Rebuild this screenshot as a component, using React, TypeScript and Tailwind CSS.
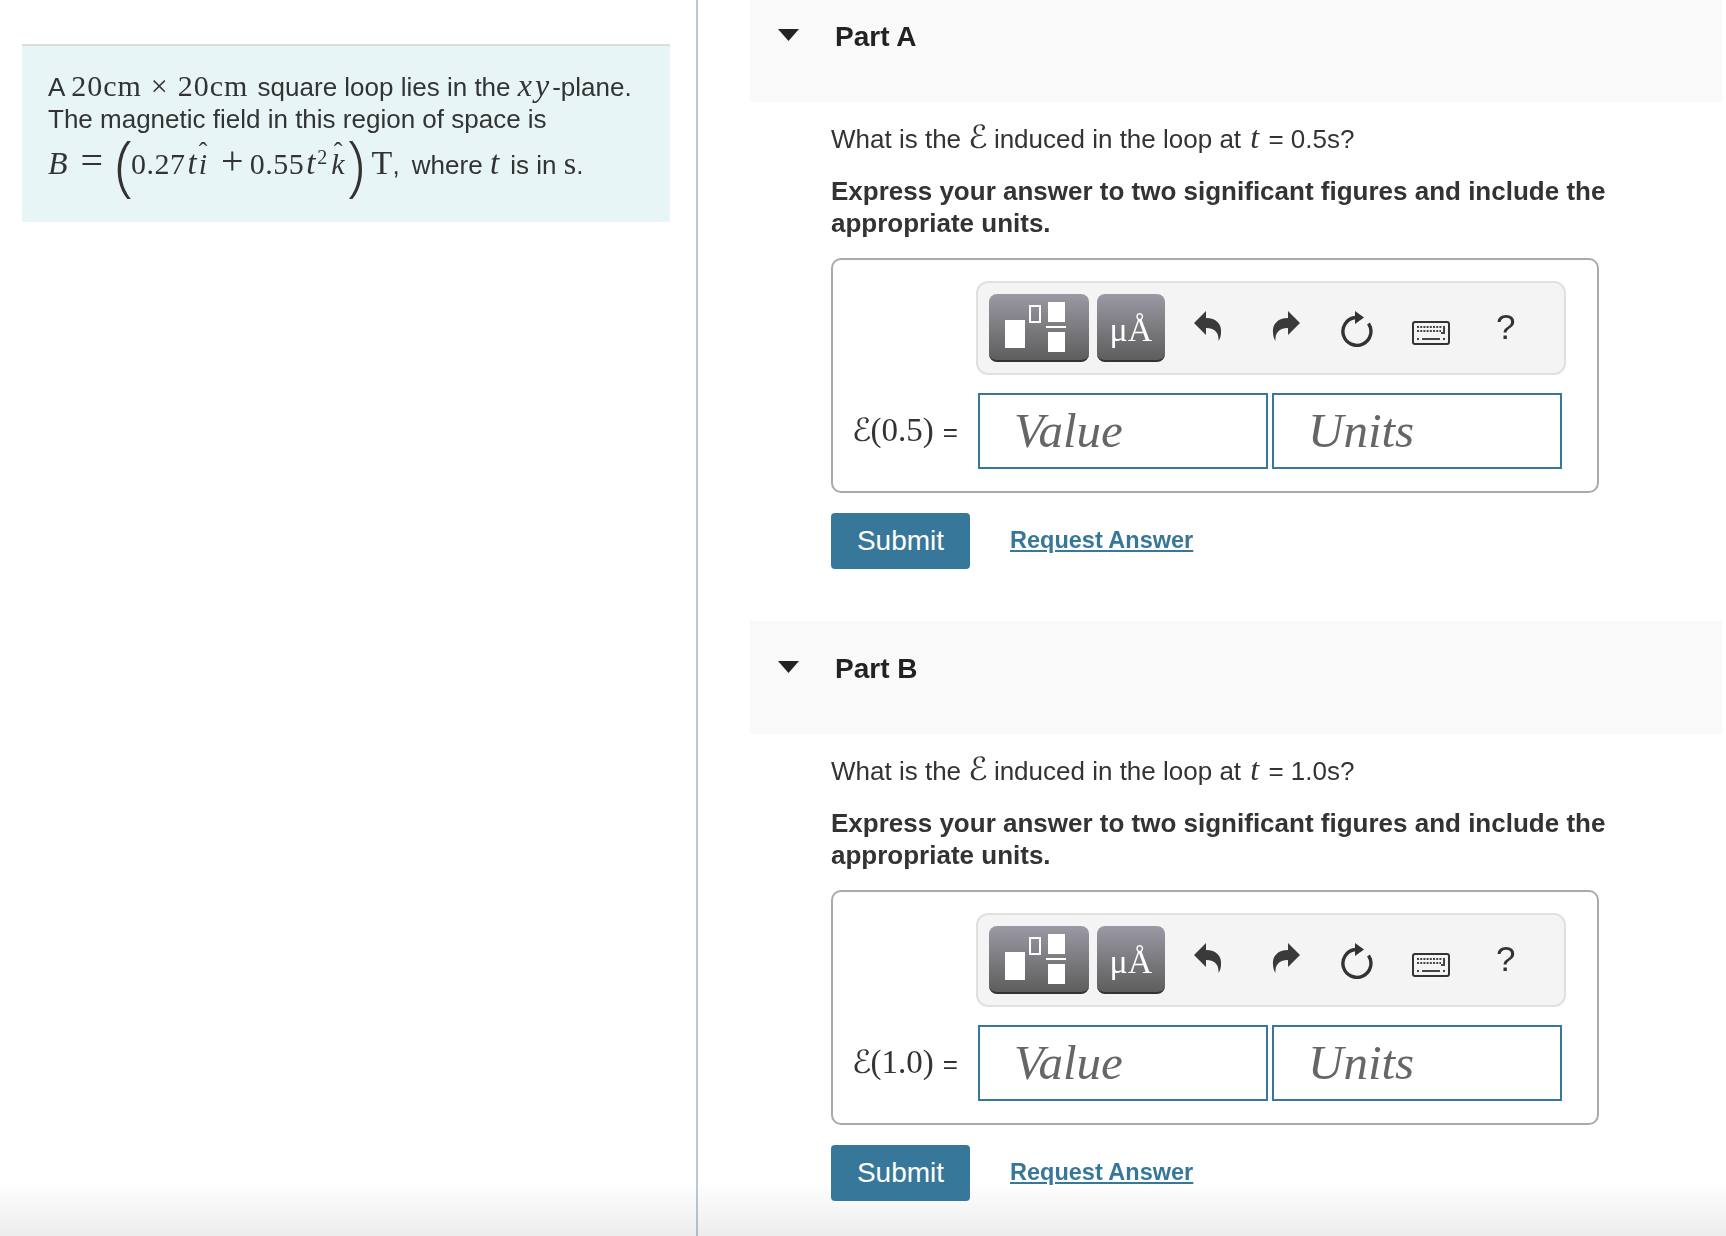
const serif = 'font-["Liberation_Serif",serif]';

function Hat({ children }: { children: string }) {
  return (
    <span className="relative inline-block italic leading-[30px]">
      {children}
      <span className="absolute left-0 right-0 top-[-9px] text-center not-italic text-[26px] leading-[24px]">ˆ</span>
    </span>
  );
}

function Script() {
  return <span className='mr-[-1px] font-["DejaVu_Sans",sans-serif] text-[32px] italic leading-[0]'>ℰ</span>;
}

function Paren({ children }: { children: string }) {
  return <span className='font-["Open_Sans",sans-serif] align-[-15px] text-[66px] font-light leading-[0]'>{children}</span>;
}

function TemplateIcon() {
  return (
    <svg width="100" height="68" viewBox="0 0 100 68" fill="#fff">
      <rect x="16" y="26" width="20" height="28" />
      <rect x="41" y="12" width="10" height="16" fill="none" stroke="#fff" strokeWidth="2" />
      <rect x="59" y="8" width="17" height="20" />
      <rect x="57" y="32" width="20" height="2" />
      <rect x="59" y="38" width="17" height="20" />
    </svg>
  );
}

function ArrowIcon({ flip }: { flip?: boolean }) {
  return (
    <svg width="28" height="30" viewBox="0 0 28 30" fill="#3a3a3a" className={flip ? '-scale-x-100' : ''}>
      <path d="M0 12 L12 0 L12 7 C22 7 28 13 27 22 C26.8 25 26 28 24.5 30 C25 23 22 17 12 17 L12 24 Z" />
    </svg>
  );
}

function ResetIcon() {
  return (
    <svg width="32" height="36" viewBox="0 0 32 36" fill="none">
      <path d="M14 6.5 A14 14 0 1 0 27.5 12.5" stroke="#333" strokeWidth="3.4" />
      <path d="M14 0 L23 6.5 L14 13 Z" fill="#333" />
    </svg>
  );
}

function KeyboardIcon() {
  return (
    <svg width="38" height="24" viewBox="0 0 38 24" fill="none">
      <rect x="1" y="1" width="36" height="22" rx="2" stroke="#333" strokeWidth="2" />
      <path d="M5 6 H30" stroke="#444" strokeWidth="2" strokeDasharray="2 1.2" />
      <path d="M5 10 H29" stroke="#444" strokeWidth="2" strokeDasharray="2 1.2" />
      <path d="M32 5 V12 H29" stroke="#444" strokeWidth="2" />
      <path d="M5 18 H7 M10 18 H28 M31 18 H33" stroke="#444" strokeWidth="2" />
    </svg>
  );
}

function AnswerBox({ time }: { time: string }) {
  return (
    <div className="mt-[19px] h-[235px] w-[768px] rounded-[10px] border-2 border-[#aaaaaa] pl-[21px] pt-[21px]">
      <div className="ml-[122px] flex h-[94px] w-[590px] items-center rounded-[12px] border-2 border-[#e0e0e0] bg-[#f4f4f4] pl-[11px]">
        <div className="h-[68px] w-[100px] overflow-hidden rounded-[8px] border-b-2 border-[#333] bg-gradient-to-b from-[#9b9aa5] to-[#5e5e5e]">
          <TemplateIcon />
        </div>
        <div className={`ml-[8px] flex h-[68px] w-[68px] items-end justify-center rounded-[8px] border-b-2 border-[#333] bg-gradient-to-b from-[#9b9aa5] to-[#5e5e5e] pb-[10px] text-[34px] leading-[40px] text-white ${serif}`}>
          μÅ
        </div>
        <div className="ml-[29px] mt-[-4px]"><ArrowIcon /></div>
        <div className="ml-[50px] mt-[-4px]"><ArrowIcon flip /></div>
        <div className="ml-[41px] mt-[2px]"><ResetIcon /></div>
        <div className="ml-[39px] mt-[9px]"><KeyboardIcon /></div>
        <div className='ml-[46px] mt-[-2px] font-["Liberation_Sans",sans-serif] text-[35px] leading-[40px] text-[#333]'>?</div>
      </div>
      <div className="mt-[18px] flex items-center">
        <div className="ml-[-2px] w-[126px] whitespace-nowrap text-[#333]">
          <span className={`text-[33px] leading-[40px] ${serif}`}><Script />({time})</span>
          <span className="ml-[9px] text-[26px]">=</span>
        </div>
        <div className={`flex h-[76px] w-[290px] items-center border-2 border-[#37789a] pl-[34px] text-[49px] italic text-[#666] ${serif}`}>Value</div>
        <div className={`ml-[4px] flex h-[76px] w-[290px] items-center border-2 border-[#37789a] pl-[34px] text-[49px] italic text-[#666] ${serif}`}>Units</div>
      </div>
    </div>
  );
}

function Part({ name, time, pad }: { name: string; time: string; pad: string }) {
  return (
    <section>
      <div className={`flex items-start bg-[#f9f9f9] pb-[49px] pl-[28px] ${pad}`}>
        <svg width="21" height="12" viewBox="0 0 21 12" className="mt-[9px]"><path d="M0 0 H21 L10.5 12 Z" fill="#222" /></svg>
        <h2 className="ml-[36px] mt-[1px] text-[28px] font-bold leading-[32px] text-[#222]">{name}</h2>
      </div>
      <div className="pl-[81px]">
        <p className="mt-[21px] h-[32px] whitespace-nowrap text-[26px] leading-[32px]">
          What is the <Script /> induced in the loop at <span className={`mx-[2px] italic ${serif} text-[32px] leading-[0]`}>t</span> = {time}s?
        </p>
        <p className="mt-[20px] w-[800px] text-[26px] font-bold leading-[32px]">
          Express your answer to two significant figures and include the appropriate units.
        </p>
        <AnswerBox time={time} />
        <div className="mt-[20px] flex items-center">
          <button className="relative z-10 h-[56px] w-[139px] rounded-[4px] bg-[#37789a] text-[28px] text-white">Submit</button>
          <a className="ml-[40px] text-[23.5px] font-bold text-[#37789a] underline">Request Answer</a>
        </div>
      </div>
    </section>
  );
}

export default function App() {
  return (
    <div className='relative flex h-[1236px] w-[1726px] overflow-hidden bg-white font-["Liberation_Sans",sans-serif] text-[#333]'>
      <div className="h-full w-[698px] shrink-0 border-r-2 border-[#b9c9dc] pl-[22px] pt-[44px]">
        <div className="h-[178px] w-[648px] border-t-2 border-[#dddddd] bg-[#e8f5f6] pl-[26px] pt-[23px] text-[26px] leading-[32px]">
          <div className="whitespace-nowrap">
            A <span className={`text-[30px] tracking-[1px] ${serif}`}>20cm<span className="mx-[9px]">×</span>20cm</span>
            <span className="ml-[2px]"> square loop lies in the </span>
            <span className={`text-[32px] italic tracking-[3px] ${serif}`}>xy</span>-plane.
          </div>
          <div>The magnetic field in this region of space is</div>
          <div className="h-[62px] whitespace-nowrap leading-[52px]">
            <span className={`text-[30px] ${serif}`}>
              <i className="mr-[13px] text-[32px]">B</i>
              <span className="mr-[12px] text-[40px]">=</span>
              <span className="mr-[-2px]"><Paren>(</Paren></span>
              <span className="tracking-[0.5px]">0.27</span>
              <i className="ml-[2px] mr-[2px] text-[33px]">t</i>
              <Hat>i</Hat>
              <span className="ml-[14px] mr-[6px] text-[40px]">+</span>
              <span className="tracking-[0.5px]">0.55</span>
              <i className="ml-[2px] text-[33px]">t</i>
              <sup className="ml-[2px] mr-[4px] text-[20px]">2</sup>
              <span className="mr-[2px]"><Hat>k</Hat></span>
              <Paren>)</Paren>
              <span className="ml-[7px] text-[34px]">T</span>
            </span>
            <span>,</span>
            <span className="ml-[5px]"> where&nbsp;</span>
            <span className={`text-[33px] italic ${serif}`}>t</span>
            <span className="ml-[4px]">&nbsp;is in&nbsp;</span>
            <span className={`text-[32px] ${serif}`}>s</span>
            <span>.</span>
          </div>
        </div>
      </div>
      <div className="w-[1024px] pl-[52px]">
        <div className="w-[972px]">
          <Part name="Part A" time="0.5" pad="pt-[20px]" />
          <div className="h-[52px]" />
          <Part name="Part B" time="1.0" pad="pt-[31px]" />
        </div>
      </div>
      <div className="pointer-events-none absolute bottom-0 left-0 h-[56px] w-full bg-gradient-to-b from-white to-[#ededed] mix-blend-multiply" />
    </div>
  );
}
